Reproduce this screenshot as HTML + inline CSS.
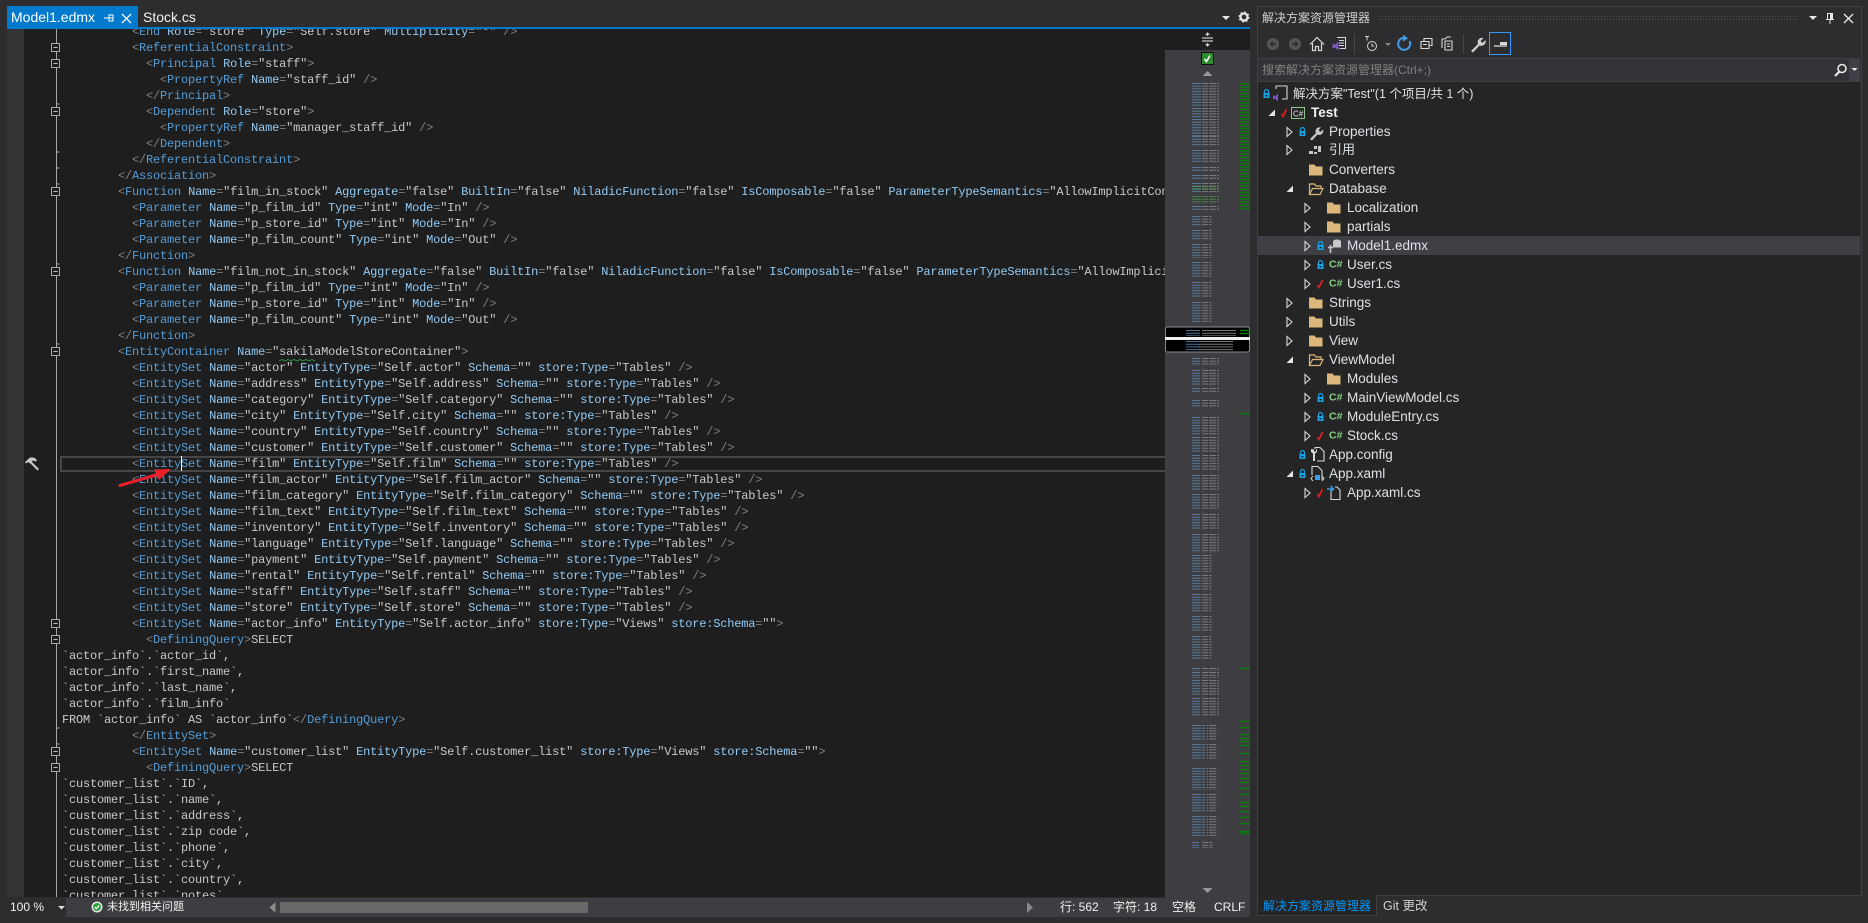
<!DOCTYPE html>
<html><head><meta charset="utf-8"><title>Model1.edmx</title>
<style>
html,body{margin:0;padding:0;width:1868px;height:923px;overflow:hidden;background:#2d2d30}
body{position:relative;font-family:"Liberation Sans","Noto Sans CJK SC",sans-serif;color:#dcdcdc}
.abs,.r{position:absolute}
.r{white-space:nowrap;line-height:18px;font-size:13.5px;color:#dce0e4}
.c{font-size:12px}
#code{position:absolute;left:24px;top:29px;width:1141px;height:868px;background:#1e1e1e;overflow:hidden}
#code pre{position:absolute;left:38px;top:-5px;margin:0;font:12px/16px "Liberation Mono",monospace;letter-spacing:-.2px;color:#c8c8c8}
pre b,pre i,pre s{font-weight:normal;font-style:normal;text-decoration:none}
pre b{color:#569cd6}pre i{color:#92caf4}pre s{color:#808080}
svg text{font-family:"Liberation Sans","Noto Sans CJK SC",sans-serif}
</style></head><body>
<div class="abs" style="left:7px;top:29px;width:17px;height:868px;background:#333335"></div>
<div class="abs" style="left:7px;top:6px;width:131px;height:21px;background:#007acc"></div>
<div class="abs" style="left:7px;top:27px;width:1243px;height:2px;background:#007acc"></div>
<div class="r" style="left:11px;top:8px;color:#fff;font-size:14px">Model1.edmx</div>
<div class="r" style="left:143px;top:8px;color:#f1f1f1;font-size:14px">Stock.cs</div>
<div id="code"><pre>          <s>&lt;</s><b>End</b> <i>Role</i><s>=</s>"store" <i>Type</i><s>=</s>"Self.store" <i>Multiplicity</i><s>=</s>"*" <s>/&gt;</s>
          <s>&lt;</s><b>ReferentialConstraint</b><s>&gt;</s>
            <s>&lt;</s><b>Principal</b> <i>Role</i><s>=</s>"staff"<s>&gt;</s>
              <s>&lt;</s><b>PropertyRef</b> <i>Name</i><s>=</s>"staff_id" <s>/&gt;</s>
            <s>&lt;/</s><b>Principal</b><s>&gt;</s>
            <s>&lt;</s><b>Dependent</b> <i>Role</i><s>=</s>"store"<s>&gt;</s>
              <s>&lt;</s><b>PropertyRef</b> <i>Name</i><s>=</s>"manager_staff_id" <s>/&gt;</s>
            <s>&lt;/</s><b>Dependent</b><s>&gt;</s>
          <s>&lt;/</s><b>ReferentialConstraint</b><s>&gt;</s>
        <s>&lt;/</s><b>Association</b><s>&gt;</s>
        <s>&lt;</s><b>Function</b> <i>Name</i><s>=</s>"film_in_stock" <i>Aggregate</i><s>=</s>"false" <i>BuiltIn</i><s>=</s>"false" <i>NiladicFunction</i><s>=</s>"false" <i>IsComposable</i><s>=</s>"false" <i>ParameterTypeSemantics</i><s>=</s>"AllowImplicitConversion"
          <s>&lt;</s><b>Parameter</b> <i>Name</i><s>=</s>"p_film_id" <i>Type</i><s>=</s>"int" <i>Mode</i><s>=</s>"In" <s>/&gt;</s>
          <s>&lt;</s><b>Parameter</b> <i>Name</i><s>=</s>"p_store_id" <i>Type</i><s>=</s>"int" <i>Mode</i><s>=</s>"In" <s>/&gt;</s>
          <s>&lt;</s><b>Parameter</b> <i>Name</i><s>=</s>"p_film_count" <i>Type</i><s>=</s>"int" <i>Mode</i><s>=</s>"Out" <s>/&gt;</s>
        <s>&lt;/</s><b>Function</b><s>&gt;</s>
        <s>&lt;</s><b>Function</b> <i>Name</i><s>=</s>"film_not_in_stock" <i>Aggregate</i><s>=</s>"false" <i>BuiltIn</i><s>=</s>"false" <i>NiladicFunction</i><s>=</s>"false" <i>IsComposable</i><s>=</s>"false" <i>ParameterTypeSemantics</i><s>=</s>"AllowImplicitConversion"
          <s>&lt;</s><b>Parameter</b> <i>Name</i><s>=</s>"p_film_id" <i>Type</i><s>=</s>"int" <i>Mode</i><s>=</s>"In" <s>/&gt;</s>
          <s>&lt;</s><b>Parameter</b> <i>Name</i><s>=</s>"p_store_id" <i>Type</i><s>=</s>"int" <i>Mode</i><s>=</s>"In" <s>/&gt;</s>
          <s>&lt;</s><b>Parameter</b> <i>Name</i><s>=</s>"p_film_count" <i>Type</i><s>=</s>"int" <i>Mode</i><s>=</s>"Out" <s>/&gt;</s>
        <s>&lt;/</s><b>Function</b><s>&gt;</s>
        <s>&lt;</s><b>EntityContainer</b> <i>Name</i><s>=</s>"sakilaModelStoreContainer"<s>&gt;</s>
          <s>&lt;</s><b>EntitySet</b> <i>Name</i><s>=</s>"actor" <i>EntityType</i><s>=</s>"Self.actor" <i>Schema</i><s>=</s>"" <i>store:Type</i><s>=</s>"Tables" <s>/&gt;</s>
          <s>&lt;</s><b>EntitySet</b> <i>Name</i><s>=</s>"address" <i>EntityType</i><s>=</s>"Self.address" <i>Schema</i><s>=</s>"" <i>store:Type</i><s>=</s>"Tables" <s>/&gt;</s>
          <s>&lt;</s><b>EntitySet</b> <i>Name</i><s>=</s>"category" <i>EntityType</i><s>=</s>"Self.category" <i>Schema</i><s>=</s>"" <i>store:Type</i><s>=</s>"Tables" <s>/&gt;</s>
          <s>&lt;</s><b>EntitySet</b> <i>Name</i><s>=</s>"city" <i>EntityType</i><s>=</s>"Self.city" <i>Schema</i><s>=</s>"" <i>store:Type</i><s>=</s>"Tables" <s>/&gt;</s>
          <s>&lt;</s><b>EntitySet</b> <i>Name</i><s>=</s>"country" <i>EntityType</i><s>=</s>"Self.country" <i>Schema</i><s>=</s>"" <i>store:Type</i><s>=</s>"Tables" <s>/&gt;</s>
          <s>&lt;</s><b>EntitySet</b> <i>Name</i><s>=</s>"customer" <i>EntityType</i><s>=</s>"Self.customer" <i>Schema</i><s>=</s>"" <i>store:Type</i><s>=</s>"Tables" <s>/&gt;</s>
          <s>&lt;</s><b>EntitySet</b> <i>Name</i><s>=</s>"film" <i>EntityType</i><s>=</s>"Self.film" <i>Schema</i><s>=</s>"" <i>store:Type</i><s>=</s>"Tables" <s>/&gt;</s>
          <s>&lt;</s><b>EntitySet</b> <i>Name</i><s>=</s>"film_actor" <i>EntityType</i><s>=</s>"Self.film_actor" <i>Schema</i><s>=</s>"" <i>store:Type</i><s>=</s>"Tables" <s>/&gt;</s>
          <s>&lt;</s><b>EntitySet</b> <i>Name</i><s>=</s>"film_category" <i>EntityType</i><s>=</s>"Self.film_category" <i>Schema</i><s>=</s>"" <i>store:Type</i><s>=</s>"Tables" <s>/&gt;</s>
          <s>&lt;</s><b>EntitySet</b> <i>Name</i><s>=</s>"film_text" <i>EntityType</i><s>=</s>"Self.film_text" <i>Schema</i><s>=</s>"" <i>store:Type</i><s>=</s>"Tables" <s>/&gt;</s>
          <s>&lt;</s><b>EntitySet</b> <i>Name</i><s>=</s>"inventory" <i>EntityType</i><s>=</s>"Self.inventory" <i>Schema</i><s>=</s>"" <i>store:Type</i><s>=</s>"Tables" <s>/&gt;</s>
          <s>&lt;</s><b>EntitySet</b> <i>Name</i><s>=</s>"language" <i>EntityType</i><s>=</s>"Self.language" <i>Schema</i><s>=</s>"" <i>store:Type</i><s>=</s>"Tables" <s>/&gt;</s>
          <s>&lt;</s><b>EntitySet</b> <i>Name</i><s>=</s>"payment" <i>EntityType</i><s>=</s>"Self.payment" <i>Schema</i><s>=</s>"" <i>store:Type</i><s>=</s>"Tables" <s>/&gt;</s>
          <s>&lt;</s><b>EntitySet</b> <i>Name</i><s>=</s>"rental" <i>EntityType</i><s>=</s>"Self.rental" <i>Schema</i><s>=</s>"" <i>store:Type</i><s>=</s>"Tables" <s>/&gt;</s>
          <s>&lt;</s><b>EntitySet</b> <i>Name</i><s>=</s>"staff" <i>EntityType</i><s>=</s>"Self.staff" <i>Schema</i><s>=</s>"" <i>store:Type</i><s>=</s>"Tables" <s>/&gt;</s>
          <s>&lt;</s><b>EntitySet</b> <i>Name</i><s>=</s>"store" <i>EntityType</i><s>=</s>"Self.store" <i>Schema</i><s>=</s>"" <i>store:Type</i><s>=</s>"Tables" <s>/&gt;</s>
          <s>&lt;</s><b>EntitySet</b> <i>Name</i><s>=</s>"actor_info" <i>EntityType</i><s>=</s>"Self.actor_info" <i>store:Type</i><s>=</s>"Views" <i>store:Schema</i><s>=</s>""<s>&gt;</s>
            <s>&lt;</s><b>DefiningQuery</b><s>&gt;</s>SELECT
`actor_info`.`actor_id`,
`actor_info`.`first_name`,
`actor_info`.`last_name`,
`actor_info`.`film_info`
FROM `actor_info` AS `actor_info`<s>&lt;/</s><b>DefiningQuery</b><s>&gt;</s>
          <s>&lt;/</s><b>EntitySet</b><s>&gt;</s>
          <s>&lt;</s><b>EntitySet</b> <i>Name</i><s>=</s>"customer_list" <i>EntityType</i><s>=</s>"Self.customer_list" <i>store:Type</i><s>=</s>"Views" <i>store:Schema</i><s>=</s>""<s>&gt;</s>
            <s>&lt;</s><b>DefiningQuery</b><s>&gt;</s>SELECT
`customer_list`.`ID`,
`customer_list`.`name`,
`customer_list`.`address`,
`customer_list`.`zip code`,
`customer_list`.`phone`,
`customer_list`.`city`,
`customer_list`.`country`,
`customer_list`.`notes`,
</pre>
<div class="abs" style="left:36px;top:427px;width:1105px;height:12px;border:2px solid #464646;border-right:0"></div>
<div class="abs" style="left:157px;top:427px;width:1px;height:15px;background:#fff"></div>
</div>

<div class="abs" style="left:7px;top:898px;width:1243px;height:19px;background:#3e3e42"></div>
<div class="abs" style="left:7px;top:898px;width:59px;height:19px;background:#2d2d30"></div>
<div class="r c" style="left:10px;top:898px;color:#f1f1f1">100 %</div>
<div class="r c" style="left:107px;top:898px;color:#f1f1f1;font-size:11px">未找到相关问题</div>
<div class="abs" style="left:280px;top:902px;width:308px;height:11px;background:#686868"></div>
<div class="r c" style="left:1060px;top:898px;color:#f1f1f1">行: 562</div>
<div class="r c" style="left:1113px;top:898px;color:#f1f1f1">字符: 18</div>
<div class="r c" style="left:1172px;top:898px;color:#f1f1f1">空格</div>
<div class="r c" style="left:1214px;top:898px;color:#f1f1f1">CRLF</div>

<div class="abs" style="left:1165px;top:29px;width:85px;height:869px;background:#3e3e42"></div>
<div class="abs" style="left:1165px;top:29px;width:85px;height:21px;background:#1e1e1e"></div>

<!-- Solution explorer -->
<div class="abs" style="left:1257px;top:6px;width:603px;height:889px;border:1px solid #3f3f46;border-bottom:0"></div>
<div class="abs" style="left:1378px;top:15px;width:420px;height:6px;background:radial-gradient(#4c4c50 .7px,transparent .8px) 0 0/3px 3px"></div>
<div class="r c" style="left:1262px;top:9px;color:#d0d0d0">解决方案资源管理器</div>
<div class="abs" style="left:1258px;top:58px;width:602px;height:22px;background:#333337;border-top:1px solid #3f3f46;border-bottom:1px solid #3f3f46"></div>
<div class="abs" style="left:1849px;top:59px;width:11px;height:22px;background:#3f3f46"></div>
<div class="r c" style="left:1262px;top:61px;color:#808080">搜索解决方案资源管理器(Ctrl+;)</div>
<div class="abs" style="left:1258px;top:82px;width:602px;height:813px;background:#252526"></div>
<div class="abs" style="left:1258px;top:236px;width:602px;height:19px;background:#3f3f46"></div>

<div class="r" style="left:1293px;top:85px;font-size:12.5px">解决方案"Test"(1 个项目/共 1 个)</div>
<div class="r" style="left:1311px;top:104px;font-weight:bold;color:#f1f1f1">Test</div>
<div class="r" style="left:1329px;top:123px">Properties</div>
<div class="r c" style="left:1329px;top:141px;font-size:13px">引用</div>
<div class="r" style="left:1329px;top:161px">Converters</div>
<div class="r" style="left:1329px;top:180px">Database</div>
<div class="r" style="left:1347px;top:199px">Localization</div>
<div class="r" style="left:1347px;top:218px">partials</div>
<div class="r" style="left:1347px;top:237px">Model1.edmx</div>
<div class="r" style="left:1347px;top:256px">User.cs</div>
<div class="r" style="left:1347px;top:275px">User1.cs</div>
<div class="r" style="left:1329px;top:294px">Strings</div>
<div class="r" style="left:1329px;top:313px">Utils</div>
<div class="r" style="left:1329px;top:332px">View</div>
<div class="r" style="left:1329px;top:351px">ViewModel</div>
<div class="r" style="left:1347px;top:370px">Modules</div>
<div class="r" style="left:1347px;top:389px">MainViewModel.cs</div>
<div class="r" style="left:1347px;top:408px">ModuleEntry.cs</div>
<div class="r" style="left:1347px;top:427px">Stock.cs</div>
<div class="r" style="left:1329px;top:446px">App.config</div>
<div class="r" style="left:1329px;top:465px">App.xaml</div>
<div class="r" style="left:1347px;top:484px">App.xaml.cs</div>

<div class="abs" style="left:1376px;top:895px;width:485px;height:21px;background:#2d2d30;border-top:1px solid #3f3f46;border-left:1px solid #3f3f46;box-sizing:border-box"></div>
<div class="abs" style="left:1257px;top:895px;width:119px;height:21px;background:#252526;border-left:1px solid #3f3f46;border-bottom:1px solid #3f3f46;box-sizing:border-box"></div>
<div class="r c" style="left:1263px;top:897px;color:#0097fb">解决方案资源管理器</div>
<div class="r c" style="left:1383px;top:897px;color:#d0d0d0;font-size:12.5px">Git 更改</div>

<svg class="abs" style="left:0;top:0" width="1868" height="923" viewBox="0 0 1868 923" fill="none">
<defs>
<path id="folder" d="M0-5.5h5.5l1.5 2h6.500v9H0z" fill="#dcb67a"/>
<path id="open" d="M.5 5.5v-10.500h5l1.500 2h5v2.500M.5 5.500h10.500l3-6H3.500z" stroke="#dcb67a" stroke-width="1.200"/>
<g id="lock"><rect x="-3" y="-1" width="6" height="5" fill="#1ba1e2"/><path d="M-2-1v-1.500a2 2 0 0 1 4 0V-1" stroke="#1ba1e2" stroke-width="1.200"/><rect x="-1" y="1" width="2" height="1.500" fill="#1e1e1e"/></g>
<path id="chk" d="M-3 1l1.500 2.500L2-4" stroke="#e51e1e" stroke-width="1.600"/>
<path id="exp" d="M-2-4.500L3 0-2 4.500z" stroke="#d8d8d8" stroke-width="1.100"/>
<path id="tri" d="M3-3.500V3H-3.500z" fill="#e4e4e4"/>
<g id="cs"><text x="0" y="3.500" font-size="10.500" font-weight="bold" fill="#89d185">C#</text></g>
<filter id="bl" x="0" y="0" width="1" height="1"><feGaussianBlur stdDeviation=".35"/></filter>
</defs>

<!-- outlining -->
<path d="M56.500 29V897" stroke="#a8a8a8"/>
<path d="M56.500 104h3M56.500 152h3M56.500 168h3M56.500 184h3M56.500 264h3M56.500 344h3M56.500 728h3M56.500 744h3" stroke="#a8a8a8"/>
<g stroke="#a8a8a8" fill="#1e1e1e">
<rect x="51.500" y="43.500" width="8" height="8"/><rect x="51.500" y="59.500" width="8" height="8"/><rect x="51.500" y="107.500" width="8" height="8"/><rect x="51.500" y="187.500" width="8" height="8"/><rect x="51.500" y="267.500" width="8" height="8"/><rect x="51.500" y="347.500" width="8" height="8"/><rect x="51.500" y="619.500" width="8" height="8"/><rect x="51.500" y="635.500" width="8" height="8"/><rect x="51.500" y="747.500" width="8" height="8"/><rect x="51.500" y="763.500" width="8" height="8"/>
</g>
<path d="M53.500 47.500h4M53.500 63.500h4M53.500 111.500h4M53.500 191.500h4M53.500 271.500h4M53.500 351.500h4M53.500 623.500h4M53.500 639.500h4M53.500 751.500h4M53.500 767.500h4" stroke="#c8c8c8"/>
<path d="M279 361l3-1.500 3 1.500 3-1.500 3 1.500 3-1.500 3 1.500 3-1.500 3 1.500 3-1.500 3 1.500 3-1.500 3 1.500" stroke="#2f9e44" stroke-width=".9"/>

<!-- hammer -->
<path d="M25 462l5-4.500h4l3 2.500-1 1.500-3-1-3 3-2-1.500-2 1.500zM31 461l8 8-1.500 1.500-8-8z" fill="#c8c8c8"/>
<!-- red arrow -->
<path d="M120 485.500L156 475" stroke="#e8202a" stroke-width="3" stroke-linecap="round"/>
<path d="M171 469L154 469.500 159 480z" fill="#e8202a"/>

<!-- tab icons -->
<path d="M104 18h5M109 15v6h4v-6zM109 18h4M113 15v6" stroke="#fff"/>
<path d="M122 14l9 9M131 14l-9 9" stroke="#fff" stroke-width="1.300"/>
<path d="M1222 16h8l-4 4z" fill="#e8e8e8"/>
<circle cx="1244" cy="17" r="3.500" stroke="#e8e8e8" stroke-width="2.200"/><circle cx="1244" cy="17" r="5" stroke="#e8e8e8" stroke-width="1" stroke-dasharray="2 1.930"/>

<!-- minimap top -->
<path d="M1202 38h11M1202 41h11" stroke="#f0f0f0"/><path d="M1207.500 33v3M1207.500 43v3M1205.500 35l2-2 2 2M1205.500 44l2 2 2-2" stroke="#d8d8d8"/>
<rect x="1201.500" y="52.500" width="12" height="12" fill="#2c8a2c" stroke="#111"/>
<path d="M1204.500 59l2 2.500 3.500-6" stroke="#fff" stroke-width="1.500"/>
<path d="M1207.500 71l5 5h-10zM1207.500 893l-5-5h10z" fill="#999"/>

<!-- minimap stripes -->
<g stroke-dasharray="1 1.700" filter="url(#bl)">
<g opacity=".6">
<path stroke="#6d9fd0" stroke-width="14" d="M1194 83V106M1194 108V118M1194 119V136M1194 136V146M1194 150V163M1194 167V171M1194 175V180M1194 183V192M1194 206V211M1193 216V226M1193 230V240M1193 244V258M1193 262V278M1193 282V298M1193 302V322M1193 358V366M1193 370V386M1193 388V392M1193 400V408M1193 417V435M1193 437V452M1193 455V470M1193 475V490M1193 494V510M1193 514V530M1193 534V553M1193 555V572M1193 575V590M1193 594V612M1193 616V632M1193 636V660M1193 668V671M1193 672V678M1193 680V695M1193 698V716M1198 725V740M1198 744V760M1198 768V790M1198 794V812M1198 816V836M1192 842V848"/>
</g>
<g opacity=".42">
<path stroke="#c8c8c8" stroke-width="36" d="M1219 83V106M1219 119V136M1219 150V163M1219 417V435M1219 437V452M1219 455V470M1219 475V490"/>
<path stroke="#c8c8c8" stroke-width="28" d="M1215 108V118M1215 136V146M1215 494V510M1215 514V530M1215 534V553"/>
<path stroke="#c8c8c8" stroke-width="18" d="M1210 167V171M1210 175V180M1210 183V192M1210 206V211M1210 370V386M1210 400V408M1210 668V671M1210 698V716M1210 672V678M1210 680V695M1210 358V366M1210 388V392"/>
<path stroke="#c8c8c8" stroke-width="11" d="M1206 216V226M1206 230V240M1206 244V258M1206 262V278M1206 282V298M1206 302V322M1206 555V572M1206 575V590M1206 594V612M1206 616V632M1206 636V660M1212 725V740M1212 744V760M1212 768V790M1212 794V812M1212 816V836M1207 842V848"/>
</g>
<path stroke="#4cae4c" stroke-width="58" opacity=".6" d="M1211 186V191M1211 196V203"/>
</g>
<path d="M1201.500 83V848M1208.500 83V848M1216.500 83V848M1225.500 83V848M1232.500 83V848" stroke="#3e3e42"/>
<path d="M1245 83V210" stroke="#0b7a0b" stroke-width="10" stroke-dasharray="1.500 1.700"/>
<path d="M1240 413.500h10M1240 668.500h10M1240 721.500h10M1240 727.500h10M1240 734.500h10M1240 738.500h10M1240 741.500h10M1240 745.500h10M1240 753.500h10M1240 761.500h10M1240 765.500h10M1240 769.500h10M1240 773.500h10M1240 778.500h10M1240 782.500h10M1240 788.500h10M1240 794.500h10M1240 802.500h10M1240 806.500h10M1240 811.500h10M1240 817.500h10M1240 823.500h10M1240 831.500h10M1240 833.500h10" stroke="#0b7a0b" stroke-width="1.500"/>

<!-- viewport -->
<rect x="1165.500" y="327" width="84" height="25" rx="2" fill="#000" stroke="#8a8a8a"/>
<g stroke-dasharray="1 1.700" opacity=".7"><path d="M1193 330V336M1193 341V351" stroke="#6d9fd0" stroke-width="14"/><path d="M1219 330V336M1216 341V351" stroke="#aaa" stroke-width="34"/></g>
<path d="M1240 330.500h10M1240 333.500h10" stroke="#0b7a0b" stroke-width="1.500"/>
<rect x="1165" y="337" width="85" height="3" fill="#f0f0f0"/>

<!-- status icons -->
<path d="M58 906h7l-3.500 3.500z" fill="#ddd"/>
<circle cx="97" cy="907" r="5.500" fill="#e8e8e8"/><circle cx="97" cy="907" r="4" fill="#2e9e3e"/><path d="M94.800 907l1.600 1.700 2.800-3.200" stroke="#fff" stroke-width="1.300"/>
<path d="M275.500 902v11l-6-5.500zM1027 902v11l6-5.500z" fill="#8a8a8a"/>

<!-- explorer header -->
<path d="M1809 16h8l-4 4z" fill="#e8e8e8"/>
<path d="M1827.500 13.500h5v6h-5zM1826 19.500h8M1830 19.500v4.500" stroke="#e8e8e8"/><rect x="1830" y="14" width="2" height="5" fill="#e8e8e8"/>
<path d="M1844 14l9 9M1853 14l-9 9" stroke="#e8e8e8" stroke-width="1.300"/>
<circle cx="1842" cy="68.500" r="4" stroke="#e8e8e8" stroke-width="1.600"/><path d="M1839 72l-4 4" stroke="#e8e8e8" stroke-width="2.200"/>
<path d="M1851.500 68h6l-3 3z" fill="#e8e8e8"/>

<!-- toolbar -->
<circle cx="1273" cy="44" r="6" fill="#555"/><path d="M1276 44h-5M1273 41.500l-2.500 2.500 2.500 2.500" stroke="#2d2d30" stroke-width="1.400"/>
<circle cx="1295" cy="44" r="6" fill="#555"/><path d="M1292 44h5M1295 41.500l2.500 2.500-2.500 2.500" stroke="#2d2d30" stroke-width="1.400"/>
<path d="M1310 44.500l7-7 7 7M1312.500 43v7.500h3v-4h3v4h3V43" stroke="#d8d8d8" stroke-width="1.200"/>
<path d="M1337 37.500h8.500v11h-6M1339 40.500h5M1339 43h5M1339 45.500h5" stroke="#d8d8d8"/>
<path d="M1333 44l2 1.500 3-3v7l-3-3-2 1.500zM1333 44v3" fill="#7b4fc9" stroke="#8e5fd8" stroke-width=".8"/>
<path d="M1354.500 34v20M1463.500 34v20" stroke="#46464a"/>
<path d="M1365 36.500h4M1367 36.500v4" stroke="#d8d8d8"/><circle cx="1372" cy="46" r="4.500" stroke="#d8d8d8"/><path d="M1372 43.500V46h2" stroke="#d8d8d8"/>
<path d="M1385 43h6l-3 3z" fill="#888"/>
<path d="M1409.500 41a6 6 0 1 1-2.500-2.500" stroke="#3f9ee8" stroke-width="2"/><path d="M1403 34.500l5 4-5 3z" fill="#3f9ee8"/>
<path d="M1424 41.500v-3h8v7h-2.500M1421 41.500h8v7h-8zM1423 44.500h4" stroke="#d8d8d8" stroke-width="1.100"/>
<path d="M1442 48v-9h3l2-2h4M1445 41h7v9h-7zM1447 44h3M1447 46.500h3" stroke="#d8d8d8" stroke-width="1.100"/>
<path d="M1471 51l7-7a4.500 4.500 0 0 1 5.500-6l-3 3 2 2 3-3a4.500 4.500 0 0 1-6 5.500l-6.500 7z" fill="#d0d0d0"/>
<rect x="1489.500" y="32.500" width="21" height="22" stroke="#3399ff"/>
<path d="M1494 46h13" stroke="#e8e8e8" stroke-width="1.200"/><rect x="1500" y="42" width="7" height="3" fill="#d8d8d8"/>

<!-- tree icons -->
<use href="#lock" x="1266.500" y="94"/>
<path d="M1276 89v-3h11v13h-5" stroke="#d8d8d8" stroke-width="1.100"/>
<path d="M1273 95l2 1.500 3-3v8l-3-3-2 1.500z" fill="#7b4fc9"/>
<use href="#tri" x="1272" y="113"/><use href="#chk" x="1284.500" y="113"/>
<rect x="1291.500" y="107.500" width="13" height="11" stroke="#8fc78f"/>
<text x="1293" y="116.500" font-size="8" fill="#e8e8e8">C#</text>
<use href="#exp" x="1289" y="132"/><use href="#lock" x="1302.500" y="132"/>
<path d="M1310 139l6-6a4 4 0 0 1 5-5.500l-2.500 2.500 2 2 2.500-2.500a4 4 0 0 1-5.500 5l-5.500 6z" fill="#c8c8c8"/>
<use href="#exp" x="1289" y="150"/>
<path d="M1309 151h4v3h-4zM1314 146h3v3h-3zM1318 146h3v6h-3zM1314 152h3v2h-3z" fill="#c8c8c8"/>
<use href="#folder" x="1309" y="170"/>
<use href="#tri" x="1290" y="189"/><use href="#open" x="1309" y="189"/>
<use href="#exp" x="1307" y="208"/><use href="#folder" x="1327" y="208"/>
<use href="#exp" x="1307" y="227"/><use href="#folder" x="1327" y="227"/>
<use href="#exp" x="1307" y="246"/><use href="#lock" x="1320.500" y="246"/>
<ellipse cx="1337" cy="241.500" rx="4" ry="2" fill="#c8c8c8"/><path d="M1333 241.500v6h8v-6" fill="#c8c8c8"/><path d="M1328 247.500h5M1330.500 245v8" stroke="#c8c8c8" stroke-width="1.600"/>
<use href="#exp" x="1307" y="265"/><use href="#lock" x="1320.500" y="265"/><use href="#cs" x="1329" y="264"/>
<use href="#exp" x="1307" y="284"/><use href="#chk" x="1320.500" y="284"/><use href="#cs" x="1329" y="283"/>
<use href="#exp" x="1289" y="303"/><use href="#folder" x="1309" y="303"/>
<use href="#exp" x="1289" y="322"/><use href="#folder" x="1309" y="322"/>
<use href="#exp" x="1289" y="341"/><use href="#folder" x="1309" y="341"/>
<use href="#tri" x="1290" y="360"/><use href="#open" x="1309" y="360"/>
<use href="#exp" x="1307" y="379"/><use href="#folder" x="1327" y="379"/>
<use href="#exp" x="1307" y="398"/><use href="#lock" x="1320.500" y="398"/><use href="#cs" x="1329" y="397"/>
<use href="#exp" x="1307" y="417"/><use href="#lock" x="1320.500" y="417"/><use href="#cs" x="1329" y="416"/>
<use href="#exp" x="1307" y="436"/><use href="#chk" x="1320.500" y="436"/><use href="#cs" x="1329" y="435"/>
<use href="#lock" x="1302.500" y="455"/>
<path d="M1315 449v-1.500h5l4 4V461h-7" stroke="#d8d8d8" stroke-width="1.100"/><path d="M1311 449v3l2 1.500V461h2v-7.500l2-1.500v-3l-1 .500v2h-2v-2z" fill="#d8d8d8"/>
<use href="#tri" x="1290" y="474"/><use href="#lock" x="1302.500" y="474"/>
<path d="M1312 475v-8.500h6l4 4V480" stroke="#d8d8d8" stroke-width="1.100"/><rect x="1315" y="475" width="5" height="5" fill="#3f9ee8"/><path d="M1313 476l-2 2.500 2 2.500M1322 476l2 2.500-2 2.500" stroke="#d8d8d8"/>
<use href="#exp" x="1307" y="493"/><use href="#chk" x="1320.500" y="493"/>
<path d="M1331 490v9.500h9V490l-3-3h-2" stroke="#d8d8d8" stroke-width="1.100"/><path d="M1327 489h6M1330.500 486l3 3-3 3" stroke="#3f9ee8" stroke-width="1.400"/>
</svg>
</body></html>
